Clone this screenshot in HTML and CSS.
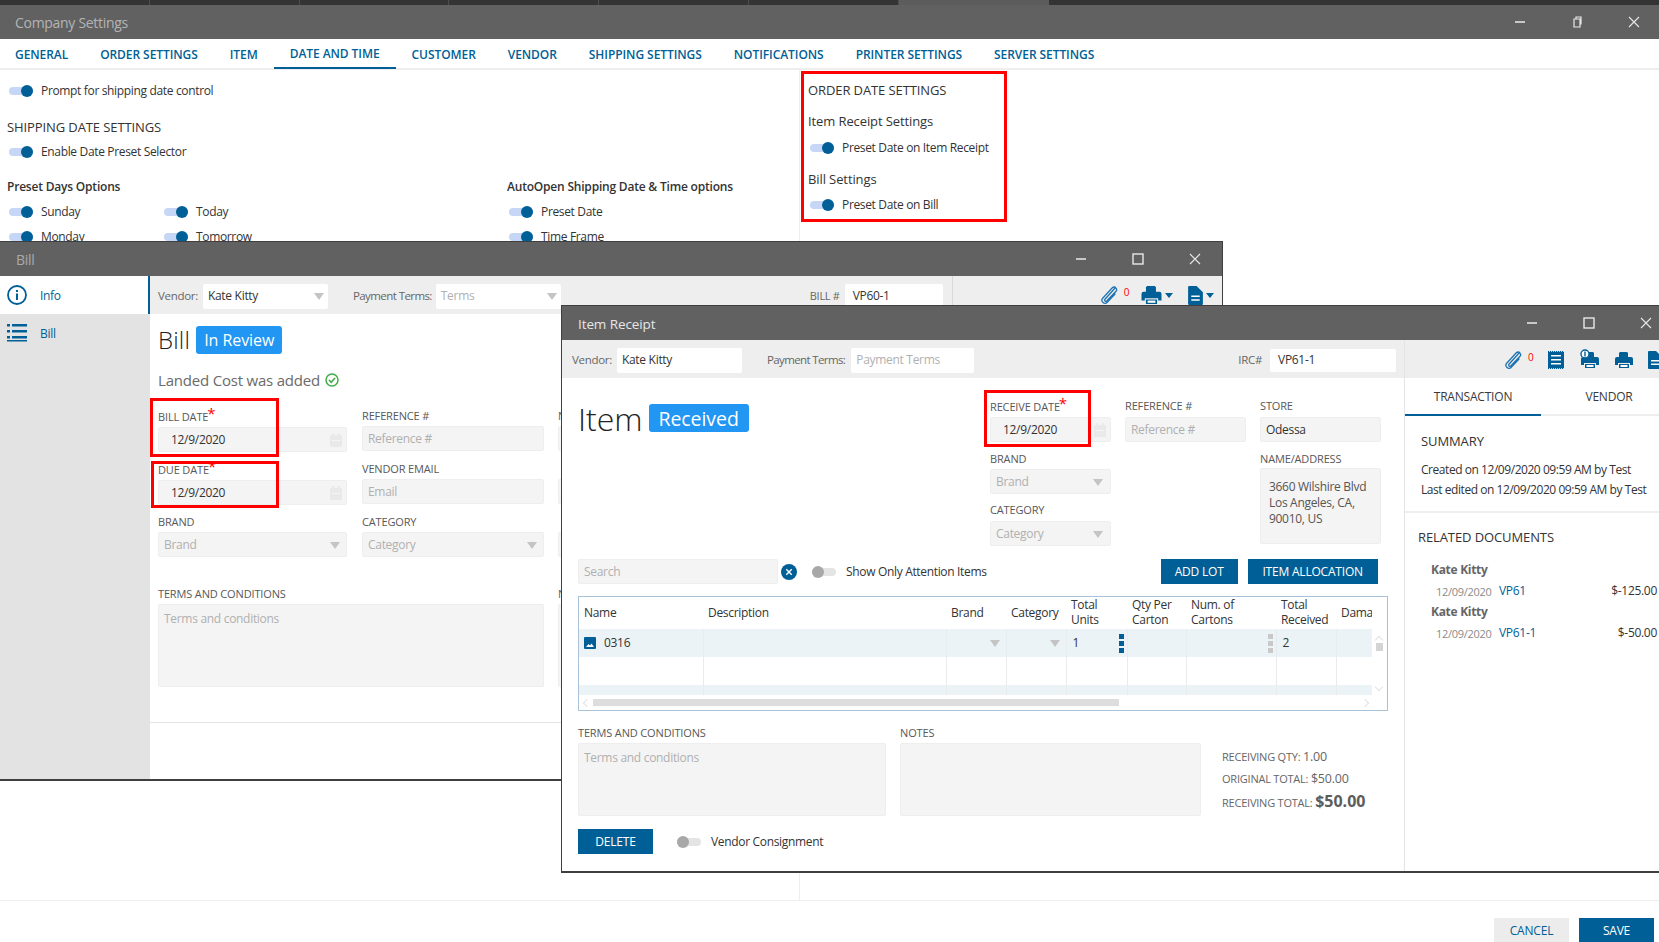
FILE: index.html
```html
<!DOCTYPE html>
<html lang="en">
<head>
<meta charset="utf-8">
<title>Company Settings</title>
<link rel="stylesheet" href="styles.css">
</head>
<body>
<svg class="defs" width="0" height="0" aria-hidden="true">
  <symbol id="i-min" viewBox="0 0 12 12"><path d="M1 6h10" stroke="#c8c8c8" stroke-width="2"/></symbol>
  <symbol id="i-max" viewBox="0 0 12 12"><rect x="1" y="1" width="10" height="10" fill="none" stroke="#e8e8e8" stroke-width="1.4"/></symbol>
  <symbol id="i-restore" viewBox="0 0 12 12"><path d="M3 3h6v8H3zM5 3V1h5v7H9" fill="none" stroke="#e8e8e8" stroke-width="1.2"/></symbol>
  <symbol id="i-x" viewBox="0 0 12 12"><path d="M1 1l10 10M11 1L1 11" stroke="#e8e8e8" stroke-width="1.1"/></symbol>
  <symbol id="i-clip" viewBox="0 0 18 20"><path d="M15.5 2.5 5 14.2c-1 1.2.6 2.9 1.8 1.8L16 6.3c2-2.3-1.3-5.700-3.700-3.500L2.700 13.300c-2.600 3 1.900 7 4.500 4.100L15 9" fill="none" stroke="#1f73b0" stroke-width="1.300" stroke-linecap="round"/></symbol>
  <symbol id="i-print" viewBox="0 0 18 18"><path d="M5 1h7l1 1v4H4V2zM2 6h14a2 2 0 0 1 2 2v6h-3v-2H3v2H0V8a2 2 0 0 1 2-2zM4 13h10v4H4z" fill="#005f96"/><path d="M5.500 14h7v2h-7z" fill="#fff"/></symbol>
  <symbol id="i-doc" viewBox="0 0 14 18"><path d="M0 1a1 1 0 0 1 1-1h7l6 6v11a1 1 0 0 1-1 1H1a1 1 0 0 1-1-1z" fill="#005f96"/><path d="M3 9h8v1.500H3zM3 12.500h8V14H3z" fill="#fff"/></symbol>
  <symbol id="i-cal" viewBox="0 0 14 16"><path d="M1 3h12v12H1zM3 1h2v3H3zM9 1h2v3H9z" fill="#e9e9e9"/><path d="M3 8h8v1H3z" fill="#f6f6f6"/></symbol>
  <symbol id="i-receipt" viewBox="0 0 16 18"><path d="M0 .8h16v16.400H0z" fill="#005f96"/><path d="M0 .5h16M0 17.500h16" stroke="#005f96" stroke-width="1" stroke-dasharray="1 1"/><path d="M3 4h10v1.600H3zM3 8h10v1.600H3zM3 12h10v1.600H3z" fill="#fff"/></symbol>
</svg>

<div class="strip">
  <span class="strip-tab"></span><span class="strip-tab"></span><span class="strip-tab"></span><span class="strip-tab"></span><span class="strip-tab"></span><span class="strip-tab"></span><span class="strip-tab strip-active"></span>
</div>

<div class="settings">
  <header class="titlebar settings-bar">
    <span class="title">Company Settings</span>
    <div class="winctl settings-ctl">
      <svg class="ctl"><use href="#i-min"/></svg>
      <svg class="ctl"><use href="#i-restore"/></svg>
      <svg class="ctl"><use href="#i-x"/></svg>
    </div>
  </header>
  <nav class="tabs">
    <a class="tab">GENERAL</a><a class="tab">ORDER SETTINGS</a><a class="tab">ITEM</a><a class="tab tab-active">DATE AND TIME</a><a class="tab">CUSTOMER</a><a class="tab">VENDOR</a><a class="tab">SHIPPING SETTINGS</a><a class="tab">NOTIFICATIONS</a><a class="tab">PRINTER SETTINGS</a><a class="tab">SERVER SETTINGS</a>
  </nav>
  <div class="settings-body">
    <section class="col-shipping">
      <div class="opt"><i class="tgl"></i>Prompt for shipping date control</div>
      <h3 class="sec ship-head">SHIPPING DATE SETTINGS</h3>
      <div class="opt opt-enable"><i class="tgl"></i>Enable Date Preset Selector</div>
      <div class="preset-grid">
        <div class="preset-col1">
          <h4 class="sub">Preset Days Options</h4>
          <div class="preset-days">
            <div class="opt"><i class="tgl"></i>Sunday</div>
            <div class="opt"><i class="tgl"></i>Today</div>
            <div class="opt"><i class="tgl"></i>Monday</div>
            <div class="opt"><i class="tgl"></i>Tomorrow</div>
          </div>
        </div>
        <div>
          <h4 class="sub">AutoOpen Shipping Date &amp; Time options</h4>
          <div class="preset-auto">
            <div class="opt"><i class="tgl"></i>Preset Date</div>
            <div class="opt"><i class="tgl"></i>Time Frame</div>
          </div>
        </div>
      </div>
    </section>
    <section class="col-order">
      <h3 class="sec">ORDER DATE SETTINGS</h3>
      <h4 class="sub-m ir-set">Item Receipt Settings</h4>
      <div class="opt order-opt first-order"><i class="tgl"></i>Preset Date on Item Receipt</div>
      <h4 class="sub-m bill-set">Bill Settings</h4>
      <div class="opt order-opt"><i class="tgl"></i>Preset Date on Bill</div>
    </section>
    <div class="redbox red-order"></div>
  </div>
  <footer class="settings-foot">
    <button class="btn btn-cancel">CANCEL</button>
    <button class="btn btn-save">SAVE</button>
  </footer>
</div>

<div class="window bill-win">
  <header class="titlebar bill-bar">
    <span class="title">Bill</span>
    <div class="winctl bill-ctl">
      <svg class="ctl"><use href="#i-min"/></svg>
      <svg class="ctl"><use href="#i-max"/></svg>
      <svg class="ctl"><use href="#i-x"/></svg>
    </div>
  </header>
  <div class="bill-main">
    <aside class="side">
      <div class="side-item side-active">
        <svg class="side-ico" viewBox="0 0 20 20"><circle cx="10" cy="10" r="9" fill="none" stroke="#005f96" stroke-width="1.800"/><path d="M9 8.500h2V15H9zM9 5h2v2H9z" fill="#005f96"/></svg>
        <span>Info</span>
      </div>
      <div class="side-item">
        <svg class="side-ico" viewBox="0 0 20 20"><path d="M0 2h3v2.500H0zM5 2h15v2.500H5zM0 8h3v2.500H0zM5 8h15v2.500H5zM0 14h3v2.500H0zM5 14h15v2.500H5zM0 18h20v1.500H0z" fill="#005f96" transform="translate(0 -1)"/></svg>
        <span>Bill</span>
      </div>
    </aside>
    <div class="bill-content">
      <div class="hdr bill-hdr">
        <label class="hdr-label">Vendor:</label>
        <div class="hdr-input sel bill-vendor">Kate Kitty<i class="caret"></i></div>
        <label class="hdr-label bill-pt">Payment Terms:</label>
        <div class="hdr-input sel bill-terms ph">Terms<i class="caret"></i></div>
        <label class="hdr-label bill-no">BILL #</label>
        <div class="hdr-input bill-num">VP60-1</div>
        <div class="bill-tools">
          <svg class="clip"><use href="#i-clip"/></svg><span class="count">0</span>
          <svg class="print"><use href="#i-print"/></svg><i class="caret-b"></i>
          <svg class="doc"><use href="#i-doc"/></svg><i class="caret-b"></i>
        </div>
      </div>
      <div class="bill-form">
        <div class="doc-head">
          <span class="doc-title">Bill</span><span class="badge">In Review</span>
        </div>
        <p class="landed">Landed Cost was added
          <svg class="check" viewBox="0 0 14 14"><circle cx="7" cy="7" r="6" fill="none" stroke="#3fae49" stroke-width="1.500"/><path d="M4 7l2.200 2.300L10 5" fill="none" stroke="#3fae49" stroke-width="1.600"/></svg>
        </p>
        <div class="form-grid">
          <div class="field"><label class="lab">BILL DATE<b class="req">*</b></label><div class="inp date">12/9/2020<svg class="cal"><use href="#i-cal"/></svg></div></div>
          <div class="field up"><label class="lab low">REFERENCE #</label><div class="inp ph">Reference #</div></div>
          <div class="field up col3"><label class="lab low">NOTES</label><div class="inp"></div></div>
          <div class="field"><label class="lab">DUE DATE<b class="req">*</b></label><div class="inp date">12/9/2020<svg class="cal"><use href="#i-cal"/></svg></div></div>
          <div class="field up"><label class="lab low">VENDOR EMAIL</label><div class="inp ph">Email</div></div>
          <div class="field up col3"><div class="lab"></div><div class="inp"></div></div>
          <div class="field up"><label class="lab low">BRAND</label><div class="inp sel ph">Brand<i class="caret"></i></div></div>
          <div class="field up"><label class="lab low">CATEGORY</label><div class="inp sel ph">Category<i class="caret"></i></div></div>
          <div class="field up col3"><div class="lab"></div><div class="inp"></div></div>
        </div>
        <div class="terms-row">
          <div class="terms-field"><label class="lab low">TERMS AND CONDITIONS</label><div class="area ph">Terms and conditions</div></div>
          <div class="notes-field"><label class="lab low">NOTES</label><div class="area"></div></div>
        </div>
      </div>
      <div class="bill-rule"></div>
    </div>
  </div>
  <div class="redbox red-bill"></div>
  <div class="redbox red-due"></div>
</div>

<div class="window ir-win">
  <header class="titlebar ir-bar">
    <span class="title ir-title">Item Receipt</span>
    <div class="winctl ir-ctl">
      <svg class="ctl"><use href="#i-min"/></svg>
      <svg class="ctl"><use href="#i-max"/></svg>
      <svg class="ctl"><use href="#i-x"/></svg>
    </div>
  </header>
  <div class="ir-main">
    <div class="ir-left">
      <div class="hdr ir-hdr">
        <label class="hdr-label">Vendor:</label>
        <div class="hdr-input ir-vendor">Kate Kitty</div>
        <label class="hdr-label ir-pt">Payment Terms:</label>
        <div class="hdr-input ir-terms ph">Payment Terms</div>
        <label class="hdr-label ir-no">IRC#</label>
        <div class="hdr-input ir-num">VP61-1</div>
      </div>
      <div class="ir-form">
        <div class="ir-top">
          <div class="doc-head ir-head">
            <span class="doc-title ir-doc-title">Item</span><span class="badge ir-badge">Received</span>
          </div>
          <div class="ir-grid">
            <div class="field"><label class="lab">RECEIVE DATE<b class="req">*</b></label><div class="inp date">12/9/2020<svg class="cal"><use href="#i-cal"/></svg></div></div>
            <div class="field"><label class="lab">REFERENCE #</label><div class="inp ph">Reference #</div></div>
            <div class="field"><label class="lab">STORE</label><div class="inp">Odessa</div></div>
            <div class="field"><label class="lab low">BRAND</label><div class="inp sel ph">Brand<i class="caret"></i></div></div>
            <div class="field"></div>
            <div class="field addr"><label class="lab low">NAME/ADDRESS</label><div class="area addr-area">3660 Wilshire Blvd<br>Los Angeles, CA,<br>90010, US</div></div>
            <div class="field"><label class="lab">CATEGORY</label><div class="inp sel ph">Category<i class="caret"></i></div></div>
          </div>
        </div>
        <div class="ir-tools">
          <div class="inp search ph">Search</div>
          <svg class="clear" viewBox="0 0 16 16"><circle cx="8" cy="8" r="8" fill="#005f96"/><path d="M5.300 5.300l5.400 5.400M10.700 5.300l-5.400 5.400" stroke="#fff" stroke-width="1.400"/></svg>
          <i class="tgl tgl-off attn-tgl"></i>
          <span class="attn">Show Only Attention Items</span>
          <button class="btn btn-lot">ADD LOT</button>
          <button class="btn btn-alloc">ITEM ALLOCATION</button>
        </div>
        <div class="gridbox">
          <div class="grid-top">
            <table class="grid">
              <colgroup>
                <col class="c-name"><col class="c-desc"><col class="c-60"><col class="c-60"><col class="c-61"><col class="c-59"><col class="c-90"><col class="c-60"><col class="c-36">
              </colgroup>
              <thead>
                <tr><th>Name</th><th>Description</th><th>Brand</th><th>Category</th><th>Total Units</th><th>Qty Per Carton</th><th>Num. of Cartons</th><th>Total Received</th><th>Dama</th></tr>
              </thead>
              <tbody>
                <tr class="r1">
                  <td><svg class="img-ico" viewBox="0 0 12 12"><rect width="12" height="12" rx="1" fill="#005f96"/><path d="M2 10l2.500-3L6 8.500 7.500 6.500 10 10z" fill="#fff"/></svg>0316</td>
                  <td></td>
                  <td class="has-caret"><i class="caret"></i></td>
                  <td class="has-caret"><i class="caret"></i></td>
                  <td class="kb-cell">1<i class="kebab"></i></td>
                  <td></td>
                  <td class="kb-cell"><i class="kebab kebab-grey"></i></td>
                  <td>2</td>
                  <td></td>
                </tr>
                <tr class="r2"><td></td><td></td><td></td><td></td><td></td><td></td><td></td><td></td><td></td></tr>
                <tr class="r3"><td></td><td></td><td></td><td></td><td></td><td></td><td></td><td></td><td></td></tr>
              </tbody>
            </table>
            <div class="vscroll"><i class="chev chev-up"></i><i class="v-thumb"></i><i class="chev chev-down"></i></div>
          </div>
          <div class="hscroll"><i class="chev chev-left"></i><i class="h-thumb"></i><i class="chev chev-right"></i></div>
        </div>
        <div class="ir-bottom">
          <div class="ir-terms-f"><label class="lab low">TERMS AND CONDITIONS</label><div class="area ir-area ph">Terms and conditions</div></div>
          <div class="ir-notes-f"><label class="lab low">NOTES</label><div class="area ir-area"></div></div>
          <div class="totals">
            <div class="tot">RECEIVING QTY: <span>1.00</span></div>
            <div class="tot">ORIGINAL TOTAL: <span>$50.00</span></div>
            <div class="tot tot-big">RECEIVING TOTAL: <strong>$50.00</strong></div>
          </div>
        </div>
        <div class="ir-actions">
          <button class="btn btn-del">DELETE</button>
          <i class="tgl tgl-off cons-tgl"></i>
          <span class="attn">Vendor Consignment</span>
        </div>
      </div>
    </div>
    <aside class="ir-right">
      <div class="hdr ir-tools-bar">
        <svg class="clip"><use href="#i-clip"/></svg><span class="count">0</span>
        <svg class="t-ico receipt"><use href="#i-receipt"/></svg>
        <span class="print-dollar">
          <svg class="t-ico"><use href="#i-print"/></svg>
          <svg class="coin" viewBox="0 0 10 10"><circle cx="5" cy="5" r="4" fill="#fff" stroke="#005f96" stroke-width="1.400"/><path d="M4.300 2.500h1.400v5H4.300z" fill="#005f96"/></svg>
        </span>
        <svg class="t-ico"><use href="#i-print"/></svg>
        <svg class="t-doc"><use href="#i-doc"/></svg>
      </div>
      <div class="rtabs">
        <span class="rtab rtab-active">TRANSACTION</span><span class="rtab">VENDOR</span>
      </div>
      <div class="summary">
        <h3 class="sec">SUMMARY</h3>
        <p class="sum-line sum-first">Created on 12/09/2020 09:59 AM by Test</p>
        <p class="sum-line">Last edited on 12/09/2020 09:59 AM by Test</p>
      </div>
      <div class="related">
        <h3 class="sec">RELATED DOCUMENTS</h3>
        <div class="rel-name rel-first">Kate Kitty</div>
        <div class="rel-row"><span class="rel-date">12/09/2020</span><a class="rel-link">VP61</a><span class="rel-amt">$-125.00</span></div>
        <div class="rel-name">Kate Kitty</div>
        <div class="rel-row"><span class="rel-date">12/09/2020</span><a class="rel-link">VP61-1</a><span class="rel-amt">$-50.00</span></div>
      </div>
    </aside>
  </div>
  <div class="redbox red-rcv"></div>
</div>
</body>
</html>
```

FILE: styles.css
```css
* { box-sizing: border-box; }
html, body { margin: 0; padding: 0; }
body {
  position: relative;
  width: 1659px;
  height: 942px;
  overflow: hidden;
  background: #fff;
  color: #3a3a3a;
  font: 12px/16px "Open Sans", "Noto Sans", "Liberation Sans", sans-serif;
  letter-spacing: -.3px;
  display: flex;
  flex-direction: column;
}
.defs { position: absolute; }
h3, h4, p { margin: 0; font-weight: 400; }

/* top strip */
.strip { height: 5px; background: #343434; display: flex; flex: none; }
.strip-tab { width: 149.800px; border-right: 1px solid #4e4e4e; }
.strip-active { background: #5c5c5c; border-right: 0; }

/* title bars */
.titlebar { background: #616161; display: flex; align-items: center; flex: none; }
.title { color: #b4b4b4; font-size: 14px; letter-spacing: -.3px; margin-top: 2px; }
.winctl { margin-left: auto; display: flex; }
.ctl { width: 12px; height: 12px; display: block; }

.settings { flex: 1; display: flex; flex-direction: column; min-height: 0; }
.settings-bar { height: 34px; padding-left: 15px; }
.settings-ctl { gap: 45px; padding-right: 19px; }

.tabs { height: 31px; flex: none; display: flex; border-bottom: 2px solid #eee; padding-left: 0; }
.tab { padding: 8px 16px 0; color: #005f96; font-weight: 600; font-size: 12px; letter-spacing: -.07px; white-space: nowrap; }
.tab:first-child { padding-left: 15px; }
.tab-active { padding-top: 7px; height: 30px; border-bottom: 2px solid #005f96; }

.settings-body { flex: 1; display: flex; position: relative; min-height: 0; }
.col-shipping { width: 800px; border-right: 1px solid #eee; padding: 13px 0 0 7px; }
.col-order { padding: 12px 0 0 8px; }
.opt { display: flex; align-items: center; height: 16px; white-space: nowrap; color: #333; letter-spacing: -.34px; }
.tgl { display: block; flex: none; position: relative; width: 24px; height: 8px; background: #c6d6f6; border-radius: 4px; margin: 0 8px 0 2px; }
.tgl::after { content: ""; position: absolute; right: 0; top: -2px; width: 12px; height: 12px; border-radius: 50%; background: #005f96; }
.tgl-off { background: #e4e4e4; margin: 0; }
.tgl-off::after { left: 0; right: auto; background: #a8a8a8; }
.sec { font-size: 13px; line-height: 16px; color: #333; letter-spacing: -.1px; }
.ship-head { margin-top: 20px; }
.opt-enable { margin-top: 9px; }
.preset-grid { display: flex; margin-top: 19px; }
.preset-col1 { width: 500px; }
.sub { font-weight: 600; color: #333; line-height: 16px; letter-spacing: -.2px; }
.preset-days { display: grid; grid-template-columns: 155px 150px; row-gap: 9px; margin-top: 9px; }
.preset-auto { display: grid; row-gap: 9px; margin-top: 9px; }
.sub-m { font-size: 13px; font-weight: 500; color: #333; letter-spacing: -.1px; }
.ir-set { margin-top: 15px; }
.order-opt { margin-top: 10px; }
.first-order { margin-top: 11px; }
.bill-set { margin-top: 15px; }

.settings-foot { height: 42px; flex: none; border-top: 1px solid #eee; display: flex; justify-content: flex-end; align-items: flex-end; gap: 10px; padding-right: 5px; }
.btn { border: 0; font: inherit; letter-spacing: -.2px; height: 25px; color: #fff; background: #005f96; padding: 0; display: block; }
.btn-cancel { width: 75px; height: 24px; background: #ececec; color: #005f96; padding-top: 2px; }
.btn-save { width: 75px; height: 24px; padding-top: 2px; }

.redbox { position: absolute; border: 3px solid #f00; pointer-events: none; }
.red-order { left: 801px; top: 1px; width: 206px; height: 151px; }

/* windows */
.window { position: absolute; background: #fff; overflow: hidden; }
.bill-win { left: 0; top: 241px; width: 1223px; height: 540px; border: solid #3f3f3f; border-width: 1px 1px 2px 0; display: flex; flex-direction: column; }
.bill-bar { height: 34px; padding-left: 16px; }
.bill-bar .title { color: #aaa; }
.bill-ctl { gap: 45px; padding-right: 21px; }
.bill-main { flex: 1; display: flex; min-height: 0; }
.side { width: 150px; background: #e3e3e3; flex: none; }
.side-item { height: 38px; display: flex; align-items: center; padding-left: 7px; color: #005f96; }
.side-item span { margin-left: 13px; margin-top: 2px; }
.side-active { background: #fff; border-right: 2px solid #005f96; font-weight: 500; }
.side-ico { width: 20px; height: 20px; flex: none; }
.bill-content { flex: 1; min-width: 0; display: flex; flex-direction: column; }
.hdr { background: #eee; height: 38px; display: flex; align-items: center; flex: none; padding-top: 2px; }
.hdr-label { color: #666; white-space: nowrap; font-size: 11.500px; }
.hdr-input { background: #fff; height: 25px; border-radius: 2px; display: flex; align-items: center; padding-left: 5px; color: #333; position: relative; flex: none; }
.caret { position: absolute; right: 4px; top: 50%; margin-top: -3px; width: 0; height: 0; border: solid transparent; border-width: 7px 5px 0; border-top-color: #c4c4c4; }
.bill-hdr { padding-left: 8px; }
.bill-vendor { width: 125px; margin-left: 5px; }
.bill-pt { margin-left: 25px; letter-spacing: -.58px; }
.bill-terms { width: 125px; margin-left: 4px; }
.bill-no { margin-left: 249px; font-size: 11px; }
.bill-num { width: 98px; margin-left: 5px; height: 24px; padding-left: 8px; }
.bill-tools { margin-left: 9px; height: 38px; width: 270px; border-left: 1px solid #d9d9d9; display: flex; align-items: center; padding-left: 147px; margin-top: -2px; }
.clip { width: 18px; height: 20px; flex: none; }
.count { color: #f00; font-size: 10px; margin-left: 6px; line-height: 10px; align-self: center; margin-top: -6px; }
.print { width: 21px; height: 20px; margin-left: 12px; flex: none; }
.doc { width: 15px; height: 19px; margin-left: 15px; flex: none; }
.caret-b { width: 0; height: 0; border: solid transparent; border-width: 5px 4px 0; border-top-color: #005f96; margin-left: 3px; flex: none; }
.ph { color: #b0b0b0; }
.bill-form { padding: 12px 0 0 8px; }
.doc-head { display: flex; align-items: center; height: 28px; }
.doc-title { font-size: 24px; color: #222; letter-spacing: .2px; font-weight: 300; }
.badge { margin-left: 6px; background: #2196f3; color: #fff; border-radius: 3px; font-size: 16px; height: 28px; line-height: 28px; padding: 0 8px; letter-spacing: -.05px; }
.landed { font-size: 15px; line-height: 20px; color: #6a6a6a; margin-top: 16px; display: flex; width: 200px; align-items: center; letter-spacing: -.2px; white-space: nowrap; }
.check { width: 14px; height: 14px; margin-left: 5px; flex: none; }
.form-grid { display: grid; grid-template-columns: 189px 182px 200px; column-gap: 15px; row-gap: 9px; margin-top: 18px; }
.col3 { margin-left: -1px; }
.up { margin-top: -1px; }
.lab { display: block; font-size: 11px; line-height: 16px; height: 16px; margin-bottom: 3px; color: #585858; letter-spacing: -.15px; white-space: nowrap; }
.low { line-height: 18px; }
.req { color: #f00; font-weight: 400; font-size: 15px; line-height: 10px; vertical-align: 2px; margin-left: -1px; }
.inp { background: #f4f4f4; border: 1px solid #eee; border-radius: 2px; height: 25px; display: flex; align-items: center; padding-left: 5px; position: relative; color: #333; }
.inp.ph { color: #b0b0b0; }
.inp .caret { right: 6px; }
.date { padding-left: 12px; }
.cal { position: absolute; right: 3px; top: 4px; width: 14px; height: 16px; }
.terms-row { display: flex; gap: 14px; margin-top: 28px; }
.terms-field { width: 386px; }
.notes-field { width: 200px; }
.area { background: #f4f4f4; border: 1px solid #eee; border-radius: 2px; padding: 6px 5px; height: 83px; }
.bill-rule { margin-top: 35px; border-top: 1px solid #e4e4e4; }

/* Item receipt */
.ir-win { left: 561px; top: 305px; width: 1098px; height: 568px; border: solid #3f3f3f; border-width: 1px 0 2px 1px; display: flex; flex-direction: column; }
.ir-bar { height: 34px; padding-left: 16px; }
.ir-title { color: #e6e6e6; font-size: 13.500px; letter-spacing: -.1px; }
.ir-ctl { gap: 45px; padding-right: 7px; }
.ir-main { flex: 1; display: flex; min-height: 0; }
.ir-left { width: 843px; flex: none; border-right: 1px solid #e4e4e4; }
.ir-hdr { padding-left: 10px; }
.ir-vendor { width: 125px; margin-left: 5px; }
.ir-pt { margin-left: 25px; letter-spacing: -.62px; }
.ir-terms { width: 123px; margin-left: 6px; }
.ir-no { margin-left: 264px; font-size: 11.500px; }
.ir-num { width: 126px; margin-left: 8px; height: 23px; padding-left: 8px; }
.ir-form { padding: 0 0 0 16px; }
.ir-top { display: flex; height: 181px; }
.ir-head { width: 412px; height: 28px; margin-top: 26px; flex: none; }
.ir-doc-title { font-size: 32px; letter-spacing: 0; padding-top: 2px; }
.ir-badge { font-size: 19.500px; width: 100px; text-align: center; padding: 1px 0 0; margin-left: 6px; }
.ir-grid { display: grid; grid-template-columns: 121px 121px 121px; column-gap: 14px; row-gap: 8px; padding-top: 20px; align-content: start; }
.ir-grid .field { height: 44px; }
.ir-grid .inp .caret { right: 7px; }
.addr { grid-row: span 2; }
.addr-area { height: 76px; padding: 10px 8px; line-height: 16px; color: #555; margin-top: -1px; }
.ir-tools { display: flex; align-items: center; height: 25px; }
.search { width: 200px; }
.clear { width: 16px; height: 16px; margin-left: 3px; flex: none; }
.attn-tgl { margin-left: 15px; }
.attn { margin-left: 10px; white-space: nowrap; color: #333; letter-spacing: -.33px; }
.btn-lot { width: 77px; margin-left: 174px; }
.btn-alloc { width: 130px; margin-left: 10px; }
.gridbox { margin-top: 12px; width: 810px; height: 115px; border: 1px solid #a9c2d8; }
.grid-top { display: flex; height: 98px; overflow: hidden; }
.grid { table-layout: fixed; border-collapse: collapse; width: 793px; flex: none; }
.c-name { width: 124px; } .c-desc { width: 243px; } .c-60 { width: 60px; } .c-61 { width: 61px; } .c-59 { width: 59px; } .c-90 { width: 90px; } .c-36 { width: 36px; }
.grid th { font-weight: 400; text-align: left; height: 32px; padding: 0 0 2px 5px; line-height: 15px; color: #333; vertical-align: middle; overflow: hidden; white-space: normal; }
.grid td { padding: 0 0 0 6px; position: relative; border-left: 1px solid #e8eced; height: 28px; color: #333; }
.grid td:first-child { border-left: 0; padding-left: 5px; }
.r1 td, .r3 td { background: #ebf3f7; }
.r3 td { height: 10px; }
.img-ico { width: 12px; height: 12px; vertical-align: -2px; margin-right: 8px; }
.has-caret .caret { right: 6px; }
.kebab { position: absolute; right: 3px; top: 5px; width: 5px; height: 5px; background: #005f96; box-shadow: 0 7px 0 #005f96, 0 14px 0 #005f96; }
.kebab-grey { background: #c8c8c8; box-shadow: 0 7px 0 #c8c8c8, 0 14px 0 #c8c8c8; }
.vscroll { width: 15px; position: relative; flex: none; }
.v-thumb { position: absolute; left: 4px; top: 46px; width: 7px; height: 8px; background: #d4d4d4; }
.chev { position: absolute; width: 6px; height: 6px; border: solid #e2e2e2; border-width: 1px 0 0 1px; }
.chev-up { left: 4px; top: 40px; transform: rotate(45deg); }
.chev-down { left: 4px; top: 87px; transform: rotate(225deg); }
.chev-left { left: 5px; top: 5px; transform: rotate(-45deg); }
.chev-right { right: 19px; top: 5px; transform: rotate(135deg); }
.hscroll { height: 15px; position: relative; }
.h-thumb { position: absolute; left: 14px; top: 4px; width: 526px; height: 7px; background: #ddd; }
.ir-bottom { display: flex; margin-top: 13px; }
.ir-terms-f { width: 308px; }
.ir-notes-f { width: 301px; margin-left: 14px; }
.ir-area { height: 73px; }
.totals { margin-left: 21px; padding-top: 22px; }
.tot { height: 22px; line-height: 22px; font-size: 11px; color: #666; white-space: nowrap; letter-spacing: -.22px; }
.tot span { font-size: 12.500px; }
.tot strong { font-size: 16px; font-weight: 700; color: #5c5c5c; letter-spacing: 0; line-height: 20px; }
.tot-big { margin-top: 1px; }
.ir-actions { display: flex; align-items: center; margin-top: 13px; }
.btn-del { width: 75px; }
.cons-tgl { margin-left: 24px; }

.ir-right { flex: 1; min-width: 0; }
.ir-tools-bar { padding-left: 99px; }
.t-ico { width: 18px; height: 18px; flex: none; display: block; }
.receipt { width: 16px; margin-left: 15px; }
.print-dollar { position: relative; margin-left: 17px; display: block; width: 18px; height: 18px; flex: none; }
.coin { position: absolute; left: -1px; top: -2px; width: 10px; height: 10px; }
.print-dollar + .t-ico { margin-left: 16px; }
.t-doc { width: 14px; height: 18px; margin-left: 15px; flex: none; }
.rtabs { display: flex; height: 38px; border-bottom: 2px solid #eee; }
.rtab { width: 136px; flex: none; text-align: center; line-height: 38px; color: #3a3a3a; letter-spacing: -.2px; }
.rtab-active { border-bottom: 2px solid #005f96; height: 38px; }
.summary { padding: 17px 0 0 16px; height: 97px; border-bottom: 2px solid #eee; }
.sum-line { white-space: nowrap; color: #333; margin-top: 4px; letter-spacing: -.45px; }
.sum-first { margin-top: 13px; }
.related { padding: 16px 0 0 13px; }
.rel-name { margin-left: 13px; font-weight: 700; color: #666; }
.rel-first { margin-top: 17px; }
.rel-row { display: flex; height: 26px; align-items: center; margin-left: 18px; margin-right: 2px; }
.rel-date { color: #8a8a8a; font-size: 11px; width: 63px; margin-top: 2px; }
.rel-link { color: #005f96; font-weight: 500; }
.rel-amt { margin-left: auto; color: #333; }
.red-bill { left: 150px; top: 156px; width: 129px; height: 59px; }
.red-due { left: 151px; top: 219px; width: 128px; height: 47px; }
.red-rcv { left: 422px; top: 84px; width: 107px; height: 57px; }
```
